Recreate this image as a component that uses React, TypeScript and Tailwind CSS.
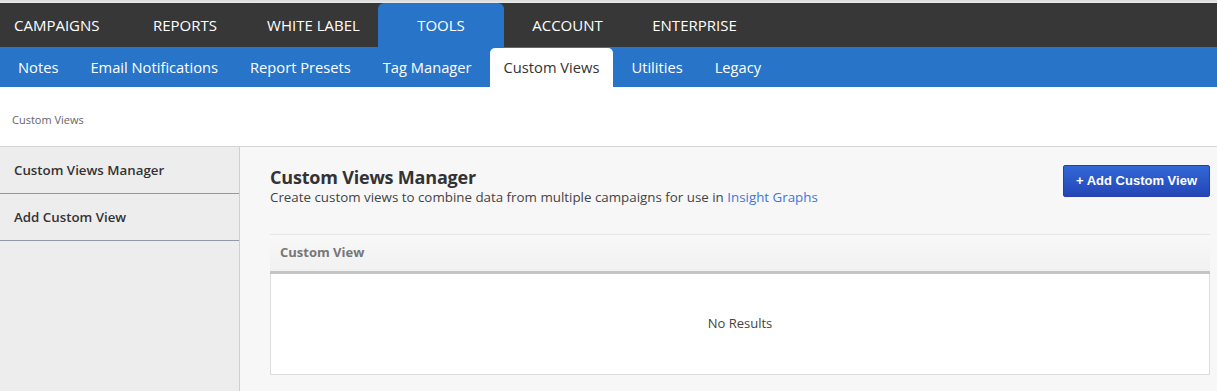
const topNav = [
  { label: 'CAMPAIGNS', w: 'w-[121px] pl-[14px] text-left' },
  { label: 'REPORTS', w: 'w-[128px] text-center' },
  { label: 'WHITE LABEL', w: 'w-[129px] text-center' },
  { label: 'TOOLS', w: 'w-[126px] text-center', active: true },
  { label: 'ACCOUNT', w: 'w-[127px] text-center' },
  { label: 'ENTERPRISE', w: 'w-[127px] text-center' },
];

const subNav = ['Notes', 'Email Notifications', 'Report Presets', 'Tag Manager', 'Custom Views', 'Utilities', 'Legacy'];

export default function App() {
  return (
    <div className="w-[1217px] h-[391px] overflow-hidden bg-white font-['Open_Sans',sans-serif] flex flex-col">
      {/* Top strip */}
      <div className="h-[3px] bg-gradient-to-b from-[#d9d9d9] to-[#ececec] shrink-0" />

      {/* Main nav */}
      <div className="h-[44px] bg-[#373737] flex items-stretch shrink-0">
        {topNav.map((item) => (
          <div
            key={item.label}
            className={`${item.w} flex items-center text-[15px] text-white ${
              item.active ? 'bg-[#2774c8] rounded-t-[6px] justify-center' : item.label === 'CAMPAIGNS' ? '' : 'justify-center'
            }`}
          >
            {item.label}
          </div>
        ))}
      </div>

      {/* Sub nav */}
      <div className="h-[40px] bg-[#2774c8] flex items-stretch gap-[4px] pl-[4px] shrink-0">
        {subNav.map((label) => (
          <div
            key={label}
            className={`px-[14px] flex items-center text-[14.7px] ${
              label === 'Custom Views' ? 'bg-white text-[#333] rounded-t-[5px] mt-[1px]' : 'text-white'
            }`}
          >
            {label}
          </div>
        ))}
      </div>

      {/* Breadcrumb */}
      <div className="h-[59px] flex items-center pl-[12px] pt-[8px] text-[11px] text-[#666] shrink-0">
        Custom Views
      </div>

      {/* Body */}
      <div className="flex flex-1 border-t border-[#d4d4d4] min-h-0">
        {/* Sidebar */}
        <div className="w-[240px] bg-[#ededed] border-r border-[#cfcfcf] shrink-0">
          <div className="h-[47px] flex items-center pl-[14px] pt-[1px] text-[13.3px] font-semibold text-[#333] border-b border-[#8f9aa6]">
            Custom Views Manager
          </div>
          <div className="h-[47px] flex items-center pl-[14px] pt-[1px] text-[13.3px] font-semibold text-[#333] border-b border-[#8f9aa6]">
            Add Custom View
          </div>
        </div>

        {/* Main */}
        <div className="flex-1 bg-[#f7f7f7] pl-[30px] pr-[7px] pt-[18px]">
          <div className="flex justify-between items-start">
            <div>
              <h1 className="text-[18px] leading-[24px] font-bold text-[#333] tracking-[-0.2px]">Custom Views Manager</h1>
              <p className="text-[13.35px] leading-[16px] text-[#444]">
                Create custom views to combine data from multiple campaigns for use in{' '}
                <span className="text-[#3b78d8]">Insight Graphs</span>
              </p>
            </div>
            <button className="w-[147px] h-[32px] bg-gradient-to-b from-[#3367d6] to-[#2446b7] border border-[#2a3cae] rounded-[2px] text-white text-[13px] font-bold font-['Liberation_Sans',Arial,sans-serif]">
              + Add Custom View
            </button>
          </div>

          {/* Table */}
          <div className="mt-[29px]">
            <div className="h-[40px] border-t border-[#e6e6e6] bg-gradient-to-b from-[#f8f8f8] to-[#f1f1f1] border-b-[3px] border-b-[#c4c4c4] flex items-center pl-[10px] text-[13px] font-bold text-[#777]">
              Custom View
            </div>
            <div className="h-[101px] bg-white border-x border-b border-[#dcdcdc] flex items-center justify-center text-[13px] text-[#444]">
              No Results
            </div>
          </div>
        </div>
      </div>
    </div>
  );
}
